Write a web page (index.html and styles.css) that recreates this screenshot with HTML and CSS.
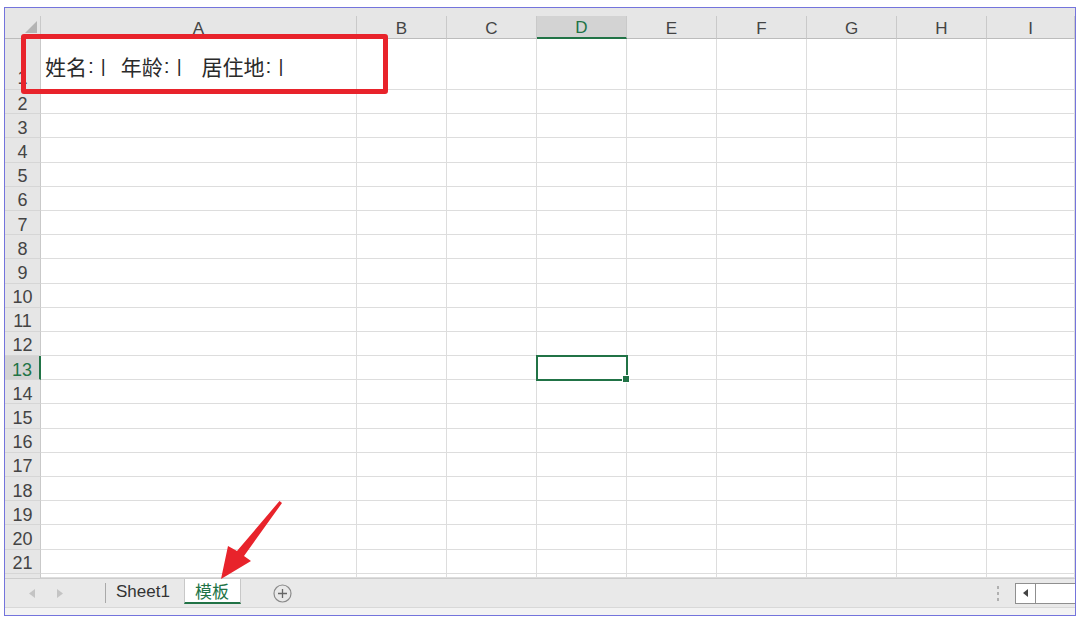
FILE: index.html
```html
<!DOCTYPE html>
<html lang="zh-CN">
<head>
    <meta charset="UTF-8">
    <meta name="viewport" content="width=device-width, initial-scale=1.0">
    <title>模板</title>
    <link rel="stylesheet" href="styles.css">
</head>
<body>
    <div class="window">
        <div class="top-strip"></div>
        <div class="sheet" id="sheet"></div>
        <div class="tabbar">
            <div class="nav">
                <svg width="6" height="9" viewBox="0 0 6 9"><path d="M6 0 L0 4.5 L6 9 Z" fill="#c4c4c4"/></svg>
                <svg width="6" height="9" viewBox="0 0 6 9"><path d="M0 0 L6 4.5 L0 9 Z" fill="#c4c4c4"/></svg>
            </div>
            <div class="sep"></div>
            <div class="tab">Sheet1</div>
            <div class="tab active">模板</div>
            <div class="add">
                <svg width="19" height="19" viewBox="0 0 19 19">
                    <circle cx="9.5" cy="9.5" r="8.5" fill="none" stroke="#8a8a8a" stroke-width="1.2"/>
                    <path d="M9.5 5 V14 M5 9.5 H14" stroke="#666" stroke-width="1.3"/>
                </svg>
            </div>
            <div class="tools">
                <div class="dots"><span></span><span></span><span></span></div>
                <div class="hscroll">
                    <div class="hscroll-btn">
                        <svg width="5" height="8" viewBox="0 0 5 8"><path d="M5 0 L0 4 L5 8 Z" fill="#444"/></svg>
                    </div>
                    <div class="hscroll-track"></div>
                </div>
            </div>
        </div>
        <div class="status">就绪　　辅助功能: 一切就绪</div>
    </div>

    <div class="callout"></div>
    <svg class="arrow" width="1080" height="620" viewBox="0 0 1080 620">
        <polygon points="221,579 228,546 237,551 279.5,501 282,503 244,556 251,561" fill="#e8232b"/>
    </svg>

    <script>
        const sheet = document.getElementById('sheet');
        const cols = ['A', 'B', 'C', 'D', 'E', 'F', 'G', 'H', 'I'];
        const activeRow = 13;
        const activeCol = 'D';
        const fields = ['姓名', '年龄', '居住地'];

        function add(cls, text) {
            const el = document.createElement('div');
            el.className = cls;
            if (text) el.textContent = text;
            sheet.appendChild(el);
            return el;
        }

        // header row
        const corner = add('corner');
        corner.appendChild(document.createElement('div')).className = 'corner-mark';
        cols.forEach(c => {
            add('col-head' + (c === activeCol ? ' current' : ''), c);
        });

        // rows 1..22, the last one is cut off by the tab bar
        for (let r = 1; r <= 22; r++) {
            let headCls = 'row-head';
            if (r === 1) headCls += ' tall';
            if (r === activeRow) headCls += ' current';
            add(headCls, r < 22 ? String(r) : '');
            cols.forEach(c => {
                let cls = 'cell';
                if (r === activeRow && c === activeCol) cls += ' active';
                const cell = add(cls);
                if (r === 1 && c === 'A') {
                    cell.classList.add('text');
                    cell.innerHTML = fields.map(f =>
                        '<span class="label">' + f + '</span><span class="colon">:</span><span class="bar">|</span>'
                    ).join('');
                }
            });
        }
    </script>
</body>
</html>
```

FILE: styles.css
```css
* {
    box-sizing: border-box;
}
body {
    margin: 0;
    width: 1080px;
    height: 620px;
    overflow: hidden;
    position: relative;
    background: #fff;
    font-family: "Liberation Sans", "Noto Sans CJK SC", sans-serif;
    color: #333;
}
.window {
    margin: 7px 0 0 4px;
    width: 1072px;
    height: 609px;
    border: 1px solid #7474dc;
    display: flex;
    flex-direction: column;
    background: #e6e6e6;
}
.top-strip {
    height: 8px;
    flex: none;
}

/* grid */
.sheet {
    flex: none;
    height: 562px;
    overflow: hidden;
    display: grid;
    grid-template-columns: 36px 316px repeat(7, 90px) 88px;
    grid-template-rows: 23px 51px repeat(20, 24.2px) 4px;
    background: #fff;
}
.corner {
    background: #e6e6e6;
    border-right: 1px solid #c9c9c9;
    border-bottom: 1px solid #bcbcbc;
    display: flex;
    justify-content: flex-end;
    align-items: flex-end;
    padding: 0 3px 5px 0;
}
.corner-mark {
    width: 12px;
    height: 12px;
    background: #b4b4b4;
    clip-path: polygon(100% 0, 100% 100%, 0 100%);
}
.col-head {
    background: #e6e6e6;
    border-right: 1px solid #c9c9c9;
    border-bottom: 1px solid #bcbcbc;
    font-size: 17px;
    color: #444;
    display: flex;
    align-items: center;
    justify-content: center;
    padding-top: 3px;
}
.col-head.current {
    background: #d3d3d3;
    color: #217346;
    border-bottom: 2px solid #217346;
}
.row-head {
    background: #e6e6e6;
    border-right: 1px solid #c9c9c9;
    border-bottom: 1px solid #d6d6d6;
    font-size: 18px;
    color: #444;
    display: flex;
    align-items: center;
    justify-content: center;
    padding-top: 5px;
}
.row-head.tall {
    align-items: flex-end;
    padding-bottom: 0;
}
.row-head.current {
    background: #d3d3d3;
    color: #217346;
    border-right: 2px solid #217346;
}
.cell {
    border-right: 1px solid #dddddd;
    border-bottom: 1px solid #dddddd;
}
.cell.text {
    display: flex;
    align-items: center;
    padding: 4px 0 0 4px;
    font-size: 21px;
    color: #2a2a2a;
}
.cell.text .colon {
    margin-left: 1px;
}
.cell.text .bar {
    margin-left: 7px;
    font-size: 19px;
}
.cell.text .label + .colon + .bar + .label {
    margin-left: 15px;
}
.cell.text .bar + .label + .colon + .bar + .label {
    margin-left: 20px;
}
.cell.active {
    position: relative;
    outline: 2px solid #217346;
    outline-offset: -1px;
}
.cell.active::after {
    content: "";
    position: absolute;
    right: -4px;
    bottom: -4px;
    width: 6px;
    height: 6px;
    background: #217346;
    border: 1px solid #fff;
}

/* sheet tabs */
.tabbar {
    flex: none;
    height: 29px;
    border-top: 1px solid #cdcdcd;
    background: #e9e9e9;
    display: flex;
}
.nav {
    width: 100px;
    display: flex;
    align-items: center;
    gap: 22px;
    padding-left: 24px;
}
.sep {
    width: 1px;
    background: #a9a9a9;
    margin: 4px 0 4px;
}
.tab {
    display: flex;
    align-items: center;
    padding: 0 14px 2px 10px;
    font-size: 17px;
    color: #333;
}
.tab.active {
    background: #fff;
    color: #217346;
    padding: 0 11px 0 10px;
    margin-bottom: 3px;
    border-left: 1px solid #c8c8c8;
    border-right: 1px solid #c8c8c8;
    border-bottom: 2px solid #217346;
}
.add {
    display: flex;
    align-items: center;
    margin-left: 32px;
}
.tools {
    margin-left: auto;
    display: flex;
    align-items: center;
}
.dots {
    display: flex;
    flex-direction: column;
    gap: 3px;
    margin-right: 16px;
}
.dots span {
    width: 2px;
    height: 3px;
    background: #b0b0b0;
}
.hscroll {
    display: flex;
    height: 21px;
}
.hscroll-btn {
    width: 21px;
    border: 1px solid #8f8f8f;
    background: #fff;
    display: flex;
    align-items: center;
    justify-content: center;
}
.hscroll-track {
    width: 39px;
    background: #fff;
    border-top: 1px solid #8f8f8f;
    border-bottom: 1px solid #8f8f8f;
}

.status {
    flex: 1;
    overflow: hidden;
    background: #f3f3f3;
    border-top: 1px solid #d8d8d8;
    padding: 4px 0 0 16px;
    font-size: 14px;
    color: #777;
    white-space: pre;
}

/* annotation */
.callout {
    position: absolute;
    left: 21px;
    top: 34px;
    width: 367px;
    height: 60px;
    border: 5px solid #e8232b;
    border-radius: 3px;
}
.arrow {
    position: absolute;
    left: 0;
    top: 0;
    pointer-events: none;
}
```
